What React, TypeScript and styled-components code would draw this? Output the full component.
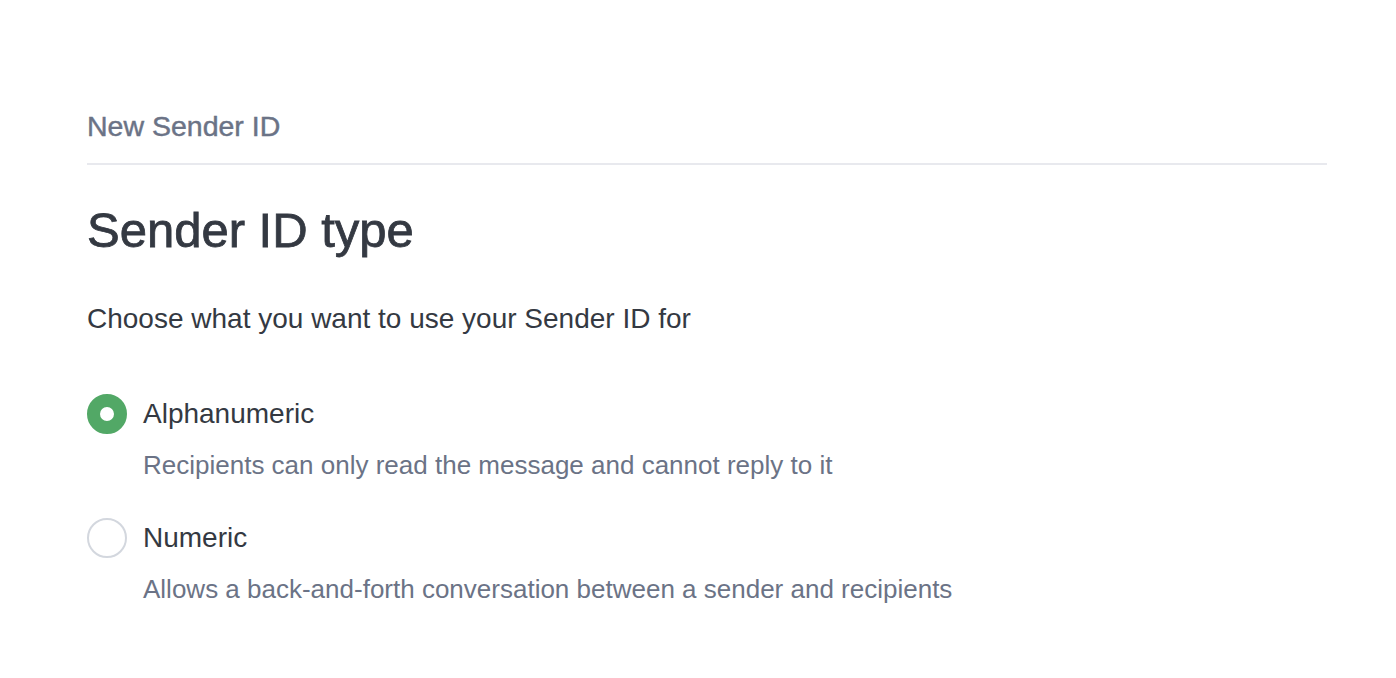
import React, { useState } from 'react';
import styled, { createGlobalStyle } from 'styled-components';

const GlobalStyle = createGlobalStyle`
  body {
    margin: 0;
    background: #ffffff;
    font-family: 'Liberation Sans', Arial, sans-serif;
  }
`;

type Option = {
  id: string;
  label: string;
  description: string;
};

const options: Option[] = [
  {
    id: 'alphanumeric',
    label: 'Alphanumeric',
    description: 'Recipients can only read the message and cannot reply to it',
  },
  {
    id: 'numeric',
    label: 'Numeric',
    description: 'Allows a back-and-forth conversation between a sender and recipients',
  },
];

const App: React.FC = () => {
  const [selected, setSelected] = useState('alphanumeric');

  return (
    <>
      <GlobalStyle />
      <Page>
        <Header>
          <PageTitle>New Sender ID</PageTitle>
        </Header>
        <Heading>Sender ID type</Heading>
        <Lead>Choose what you want to use your Sender ID for</Lead>
        <OptionList>
          {options.map((opt) => (
            <OptionItem key={opt.id} onClick={() => setSelected(opt.id)}>
              <OptionRow>
                <Radio checked={selected === opt.id} />
                <OptionLabel>{opt.label}</OptionLabel>
              </OptionRow>
              <OptionDescription>{opt.description}</OptionDescription>
            </OptionItem>
          ))}
        </OptionList>
      </Page>
    </>
  );
};

export default App;

const Page = styled.div`
  display: flex;
  flex-direction: column;
  padding: 107px 69px 0 87px;
`;

const Header = styled.div`
  padding-bottom: 18px;
  border-bottom: 2px solid #e8e9ee;
`;

const PageTitle = styled.h2`
  margin: 0;
  font-size: 28.5px;
  line-height: 38px;
  font-weight: 400;
  color: #6b7386;
  -webkit-text-stroke: 0.45px #6b7386;
`;

const Heading = styled.h1`
  margin: 37px 0 0;
  font-size: 49px;
  line-height: 56px;
  font-weight: 400;
  color: #343942;
  -webkit-text-stroke: 0.8px #343942;
`;

const Lead = styled.p`
  margin: 43px 0 0;
  font-size: 28px;
  line-height: 36px;
  color: #343942;
`;

const OptionList = styled.div`
  display: flex;
  flex-direction: column;
  gap: 38px;
  margin-top: 57px;
`;

const OptionItem = styled.div`
  display: flex;
  flex-direction: column;
  cursor: pointer;
`;

const OptionRow = styled.div`
  display: flex;
  align-items: center;
  gap: 16px;
`;

const Radio = styled.span<{ checked: boolean }>`
  box-sizing: border-box;
  width: 40px;
  height: 40px;
  border-radius: 50%;
  flex-shrink: 0;
  background: #ffffff;
  border: ${({ checked }) => (checked ? '13px solid #52a866' : '2px solid #d3d7de')};
`;

const OptionLabel = styled.span`
  font-size: 28px;
  line-height: 36px;
  color: #343942;
`;

const OptionDescription = styled.p`
  margin: 16px 0 0 56px;
  font-size: 26px;
  line-height: 30px;
  color: #6b7386;
`;
